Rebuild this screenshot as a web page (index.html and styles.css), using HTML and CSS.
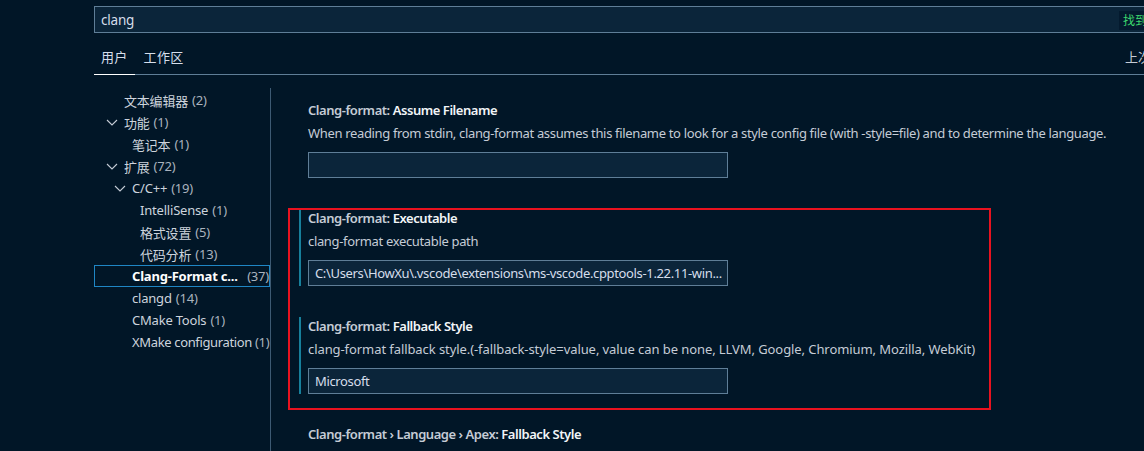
FILE: index.html
```html
<!DOCTYPE html>
<html lang="zh-CN">
<head>
<meta charset="utf-8">
<title>Settings</title>
<link rel="stylesheet" href="styles.css">
</head>
<body>
<div class="page">
  <div class="search-row">
    <div class="search">
      <span class="search-text">clang</span>
      <span class="badge">找到 74 个设置</span>
    </div>
  </div>
  <div class="tabs">
    <span class="tab active">用户</span>
    <span class="tab">工作区</span>
    <span class="tabs-spacer"></span>
    <span class="sync">上次同步时间: 刚刚</span>
  </div>
  <div class="main">
    <nav class="tree">
      <div class="row lv0"><span class="chev"></span><span class="label">文本编辑器</span><span class="count">(2)</span></div>
      <div class="row lv0"><span class="chev"><svg viewBox="0 0 16 16" width="16" height="16"><path d="M3 6 L8 11 L13 6" fill="none" stroke="currentColor" stroke-width="1.1"/></svg></span><span class="label">功能</span><span class="count">(1)</span></div>
      <div class="row lv1"><span class="chev"></span><span class="label">笔记本</span><span class="count">(1)</span></div>
      <div class="row lv0"><span class="chev"><svg viewBox="0 0 16 16" width="16" height="16"><path d="M3 6 L8 11 L13 6" fill="none" stroke="currentColor" stroke-width="1.1"/></svg></span><span class="label">扩展</span><span class="count">(72)</span></div>
      <div class="row lv1"><span class="chev"><svg viewBox="0 0 16 16" width="16" height="16"><path d="M3 6 L8 11 L13 6" fill="none" stroke="currentColor" stroke-width="1.1"/></svg></span><span class="label">C/C++</span><span class="count">(19)</span></div>
      <div class="row lv2"><span class="chev"></span><span class="label">IntelliSense</span><span class="count">(1)</span></div>
      <div class="row lv2"><span class="chev"></span><span class="label">格式设置</span><span class="count">(5)</span></div>
      <div class="row lv2"><span class="chev"></span><span class="label">代码分析</span><span class="count">(13)</span></div>
      <div class="row lv1 selected"><span class="chev"></span><span class="label sel-label">Clang-Format c...</span><span class="count sel-count">(37)</span></div>
      <div class="row lv1"><span class="chev"></span><span class="label">clangd</span><span class="count">(14)</span></div>
      <div class="row lv1"><span class="chev"></span><span class="label">CMake Tools</span><span class="count">(1)</span></div>
      <div class="row lv1 tight"><span class="chev"></span><span class="label">XMake configuration</span><span class="count">(1)</span></div>
    </nav>
    <section class="content">
      <div class="setting">
        <div class="setting-body">
          <div class="title"><span class="cat">Clang-format: </span><span class="name">Assume Filename</span></div>
          <div class="desc">When reading from stdin, clang-format assumes this filename to look for a style config file (with -style=file) and to determine the language.</div>
          <div class="input"></div>
        </div>
      </div>
      <div class="setting">
        <div class="setting-body modified">
          <div class="title"><span class="cat">Clang-format: </span><span class="name">Executable</span></div>
          <div class="desc">clang-format executable path</div>
          <div class="input">C:\Users\HowXu\.vscode\extensions\ms-vscode.cpptools-1.22.11-win...</div>
        </div>
      </div>
      <div class="setting">
        <div class="setting-body modified">
          <div class="title"><span class="cat">Clang-format: </span><span class="name">Fallback Style</span></div>
          <div class="desc wide">clang-format fallback style.(-fallback-style=value, value can be none, LLVM, Google, Chromium, Mozilla, WebKit)</div>
          <div class="input">Microsoft</div>
        </div>
      </div>
      <div class="setting">
        <div class="setting-body">
          <div class="title"><span class="cat">Clang-format › Language › Apex: </span><span class="name">Fallback Style</span></div>
        </div>
      </div>
    </section>
  </div>
  <div class="highlight"></div>
</div>
</body>
</html>
```

FILE: styles.css
```css
html, body {
  margin: 0;
  padding: 0;
  background: #011627;
  overflow: hidden;
}
body {
  width: 1144px;
  height: 451px;
  font-family: "Noto Sans", "Noto Sans CJK SC", sans-serif;
  font-size: 13px;
  color: #c5ccd6;
}
.page {
  position: relative;
  width: 1144px;
  height: 451px;
  overflow: hidden;
}
.search-row {
  padding: 6px 0 0 94px;
}
.search {
  position: relative;
  box-sizing: border-box;
  width: 1100px;
  height: 27px;
  border: 1px solid #5f7e97;
  background: #0b253a;
  display: flex;
  align-items: center;
  padding-left: 6px;
}
.search-text {
  color: #d6deeb;
  font-size: 13.5px;
  letter-spacing: -0.2px;
}
.badge {
  position: absolute;
  left: 1024px;
  top: 4px;
  height: 19px;
  line-height: 19px;
  padding: 0 4px;
  background: #041a2e;
  color: #3cd66d;
  font-size: 12px;
  white-space: nowrap;
}
.tabs {
  margin: 7px 0 0 94px;
  height: 34px;
  border-bottom: 1px solid #5f7e97;
  display: flex;
  align-items: stretch;
}
.tab {
  padding: 0 7px;
  margin-right: 2px;
  line-height: 34px;
  color: #d6deeb;
  font-size: 13px;
  letter-spacing: 0.3px;
}
.tab.active {
  box-shadow: inset 0 -1px 0 #ffffff;
  margin-bottom: -1px;
  line-height: 35px;
}
.tabs-spacer { flex: 1; }
.sync {
  width: 19px;
  overflow: hidden;
  white-space: nowrap;
  line-height: 34px;
  color: #c5ccd6;
}
.main {
  margin-top: 13px;
  display: flex;
  height: 363px;
}
.tree {
  box-sizing: content-box;
  width: 176px;
  padding: 1px 0 0 94px;
  border-right: 1px solid #3d5a73;
  flex-shrink: 0;
  overflow: hidden;
}
.row {
  box-sizing: border-box;
  height: 22px;
  display: flex;
  align-items: center;
  white-space: nowrap;
  color: #c5ccd6;
  border: 1px solid transparent;
  letter-spacing: -0.2px;
}
.row.tight { letter-spacing: -0.35px; }
.row.lv0 { padding-left: 9px; }
.row.lv1 { padding-left: 17px; }
.row.lv2 { padding-left: 25px; }
.chev {
  width: 16px;
  height: 16px;
  flex-shrink: 0;
  margin-right: 4px;
  color: #c5ccd6;
  display: flex;
}
.label { color: #cdd4dd; }
.count { color: #aab3be; margin-left: 4px; }
.row.tight .count { margin-left: 3px; }
.row.selected {
  border-color: #1f86c4;
}
.sel-label {
  font-weight: 700;
  color: #ffffff;
  flex: 1;
}
.sel-count { margin-left: 0; }
.content {
  flex: 1;
  padding: 13px 0 0 28px;
  overflow: hidden;
}
.setting {
  padding-bottom: 31px;
}
.setting-body {
  border-left: 2px solid transparent;
  padding-left: 7px;
}
.setting-body.modified {
  border-left-color: #17809c;
}
.title {
  line-height: 18px;
  font-weight: 600;
  white-space: nowrap;
  letter-spacing: -0.45px;
}
.cat { color: #c5ccd6; }
.name { color: #f2f5f8; }
.desc {
  margin-top: 5px;
  line-height: 18px;
  color: #c5ccd6;
  white-space: nowrap;
  letter-spacing: -0.34px;
}
.desc.wide { letter-spacing: -0.08px; }
.input {
  box-sizing: border-box;
  margin-top: 10px;
  width: 420px;
  height: 26px;
  border: 1px solid #5f7e97;
  background: #0b253a;
  color: #d6deeb;
  line-height: 24px;
  padding-left: 6px;
  white-space: nowrap;
  overflow: hidden;
  letter-spacing: -0.35px;
}
.highlight {
  position: absolute;
  left: 288px;
  top: 208px;
  width: 699px;
  height: 198px;
  border: 2px solid #e8121f;
}
```
